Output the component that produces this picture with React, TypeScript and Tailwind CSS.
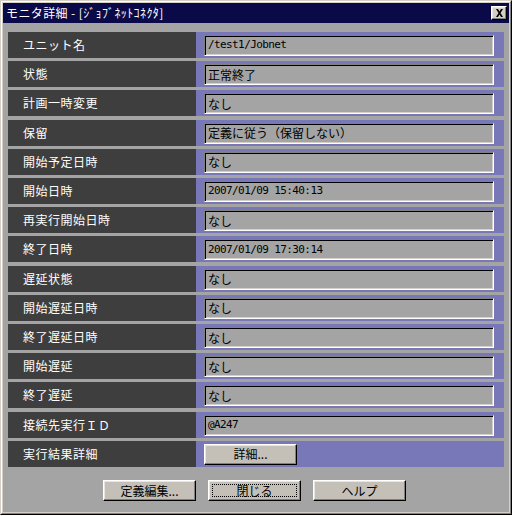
const ROWS: { label: string; value?: string; mono?: boolean; button?: boolean }[] = [
  { label: "ユニット名", value: "/test1/Jobnet", mono: true },
  { label: "状態", value: "正常終了" },
  { label: "計画一時変更", value: "なし" },
  { label: "保留", value: "定義に従う（保留しない）" },
  { label: "開始予定日時", value: "なし" },
  { label: "開始日時", value: "2007/01/09 15:40:13", mono: true },
  { label: "再実行開始日時", value: "なし" },
  { label: "終了日時", value: "2007/01/09 17:30:14", mono: true },
  { label: "遅延状態", value: "なし" },
  { label: "開始遅延日時", value: "なし" },
  { label: "終了遅延日時", value: "なし" },
  { label: "開始遅延", value: "なし" },
  { label: "終了遅延", value: "なし" },
  { label: "接続先実行ＩＤ", value: "@A247", mono: true },
  { label: "実行結果詳細", button: true },
];

const font = "font-['Noto_Sans_CJK_JP','Noto_Sans',sans-serif]";
const raised =
  "border border-t-white border-l-white border-r-black border-b-black shadow-[inset_-1px_-1px_0_#808080,inset_1px_1px_0_#e8e6e0]";

function Button({ label, focused }: { label: string; focused?: boolean }) {
  return (
    <button type="button" className={`w-[93px] h-[21px] bg-[#c4c0b8] p-[3px] ${raised}`}>
      <div
        className={`flex h-full items-center justify-center text-[12px] leading-none text-black ${
          focused ? "border border-dotted border-black" : ""
        }`}
      >
        {label}
      </div>
    </button>
  );
}

export default function App() {
  return (
    <div className={`w-[513px] h-[516px] bg-white ${font}`}>
      <div className="w-[512px] h-[515px] border border-t-[#d4d0c8] border-l-[#d4d0c8] border-r-black border-b-black">
        <div className="flex h-full flex-col border border-t-white border-l-white border-r-[#808080] border-b-[#808080] bg-[#d4d0c8] p-[1px]">
          <div className="flex h-[20px] items-center justify-between bg-[#0a0a48] pl-[3px] pr-[2px]">
            <span className="text-[12px] leading-none tracking-[0.4px] text-white">モニタ詳細 - [ｼﾞｮﾌﾞﾈｯﾄｺﾈｸﾀ]</span>
            <div className={`flex h-[14px] w-[16px] items-center justify-center bg-[#d4d0c8] ${raised}`}>
              <svg width="9" height="8" viewBox="0 0 9 8">
                <path d="M1 0h2l1.5 2.5L6 0h2L5.5 4 8 8H6L4.5 5.5 3 8H1l2.5-4z" fill="black" />
              </svg>
            </div>
          </div>
          <div className="flex flex-1 flex-col bg-[#a4a4a4] px-[5px] pt-[9px]">
            <div className="flex h-[435px] flex-col justify-between">
              {ROWS.map((r) => (
                <div key={r.label} className="grid h-[26px] grid-cols-[188px_1fr]">
                  <div className="flex items-center bg-[#3e3e3e] pl-[15px] text-[12px] tracking-[0.5px] text-white">
                    {r.label}
                  </div>
                  <div className="flex items-center bg-[#7878b8] pl-[8px] pr-[10px] pt-[1px]">
                    {r.button ? (
                      <Button label="詳細..." />
                    ) : (
                      <div className="flex h-[21px] flex-1 items-center border border-t-[#808080] border-l-[#808080] border-r-white border-b-white bg-[#a4a4a4] pl-[3px] shadow-[inset_1px_1px_0_#000,inset_-1px_-1px_0_#d4d0c8]">
                        <span
                          className={
                            r.mono
                              ? "font-['DejaVu_Sans_Mono',monospace] text-[11px] tracking-[-0.6px] text-black"
                              : "text-[12px] text-black"
                          }
                        >
                          {r.value}
                        </span>
                      </div>
                    )}
                  </div>
                </div>
              ))}
            </div>
            <div className="mt-[13px] flex justify-center gap-[12px] pr-[3px]">
              <Button label="定義編集..." />
              <Button label="閉じる" focused />
              <Button label="ヘルプ" />
            </div>
          </div>
        </div>
      </div>
    </div>
  );
}
